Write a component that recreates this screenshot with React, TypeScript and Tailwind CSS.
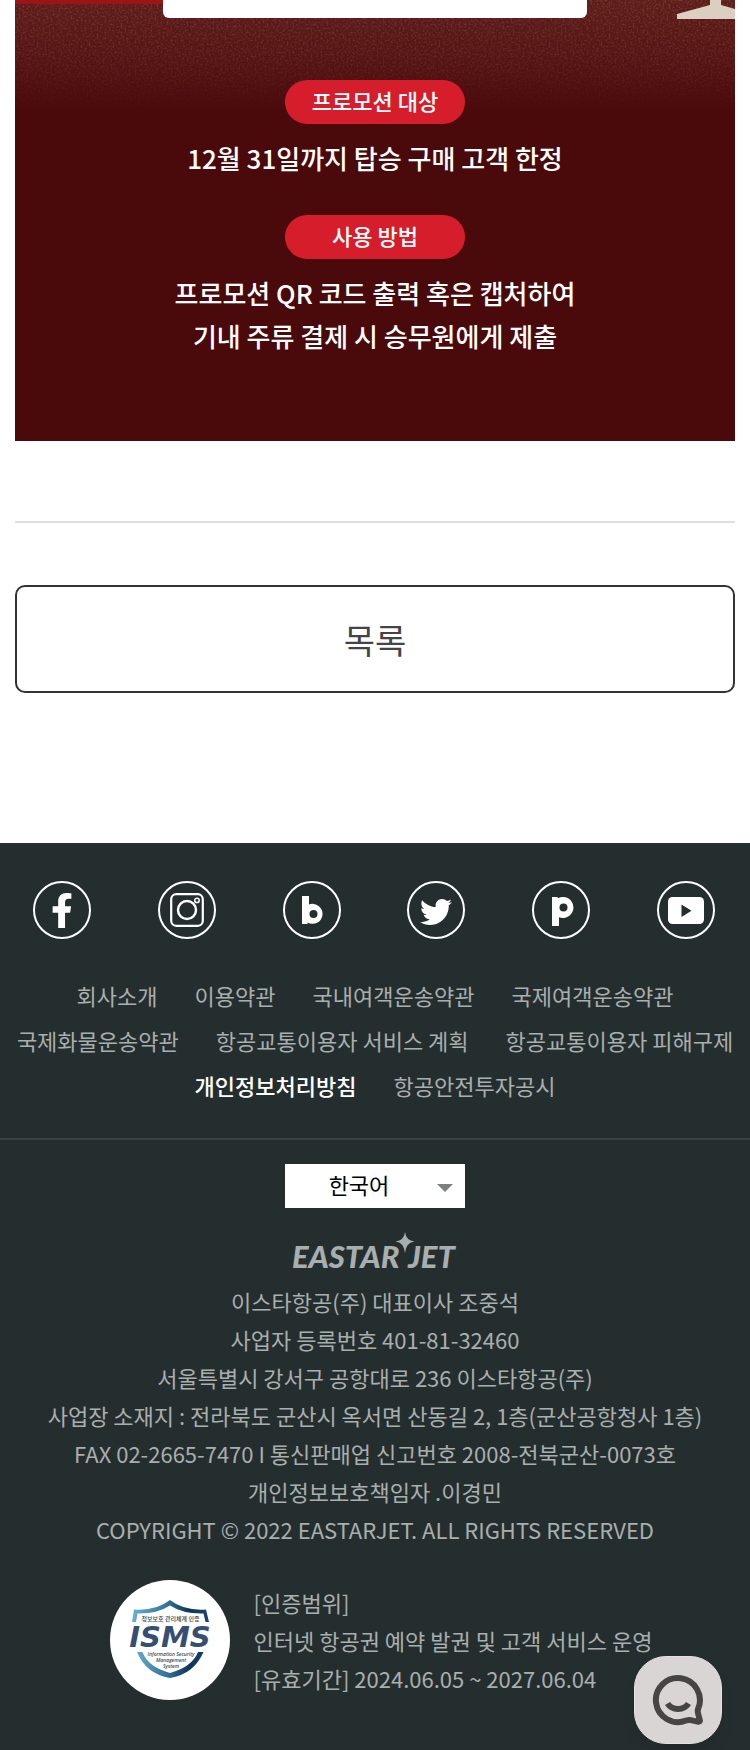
import React from "react";
import { FaFacebookF, FaTwitter } from "react-icons/fa";

const policyLinks = [
  { label: "회사소개" },
  { label: "이용약관" },
  { label: "국내여객운송약관" },
  { label: "국제여객운송약관" },
  { label: "국제화물운송약관" },
  { label: "항공교통이용자 서비스 계획" },
  { label: "항공교통이용자 피해구제" },
  { label: "개인정보처리방침", strong: true },
  { label: "항공안전투자공시" },
];

const companyLines = [
  "이스타항공(주) 대표이사 조중석",
  "사업자 등록번호 401-81-32460",
  "서울특별시 강서구 공항대로 236 이스타항공(주)",
  "사업장 소재지 : 전라북도 군산시 옥서면 산동길 2, 1층(군산공항청사 1층)",
  "FAX 02-2665-7470 I 통신판매업 신고번호 2008-전북군산-0073호",
  "개인정보보호책임자 .이경민",
  "COPYRIGHT © 2022 EASTARJET. ALL RIGHTS RESERVED",
];

function FacebookMark() {
  return <FaFacebookF className="h-[35px] w-[24px]" />;
}

function InstagramMark() {
  return (
    <svg viewBox="0 0 34 34" className="h-[34px] w-[34px]" fill="none" stroke="currentColor" aria-hidden="true">
      <rect x="1.2" y="1.2" width="31.6" height="31.6" rx="5" strokeWidth="2.2" />
      <circle cx="17" cy="17" r="9" strokeWidth="2.4" />
      <circle cx="27" cy="7.4" r="2.2" strokeWidth="1.5" />
    </svg>
  );
}

function BlogMark() {
  return (
    <svg viewBox="0 0 24 30" className="ml-0.5 h-[30px] w-6" aria-hidden="true">
      <path d="M1 1h7v8.500a10 10 0 1 1-1.500 18V29H1z" fill="currentColor" />
      <circle cx="12.500" cy="19" r="4" fill="#252e2f" />
    </svg>
  );
}

function PostMark() {
  return (
    <svg viewBox="0 0 24 30" className="ml-1 mt-0.5 h-[30px] w-6" aria-hidden="true">
      <path d="M1 1h5.500l.5 1.200A10.500 10.500 0 1 1 8 21.200V30H1z" fill="currentColor" />
      <circle cx="12.500" cy="11.500" r="4" fill="#252e2f" />
    </svg>
  );
}

function YoutubeMark() {
  return (
    <svg viewBox="0 0 36 27" className="h-[27px] w-9" aria-hidden="true">
      <rect width="36" height="27" rx="4.500" fill="currentColor" />
      <path d="M13.500 7.500v12.500l10-6.200z" fill="#252e2f" />
    </svg>
  );
}

const socials = [
  { name: "페이스북", icon: <FacebookMark /> },
  { name: "인스타그램", icon: <InstagramMark /> },
  { name: "블로그", icon: <BlogMark /> },
  { name: "트위터", icon: <FaTwitter className="mt-1 h-[32px] w-[32px]" /> },
  { name: "포스트", icon: <PostMark /> },
  { name: "유튜브", icon: <YoutubeMark /> },
];

function AirlineLogo() {
  return (
    <svg viewBox="0 0 166 38" className="h-[38px] w-[166px] overflow-visible" role="img" aria-label="EASTARJET">
      <g fill="#a9aeae" fontFamily="Lato, 'Noto Sans', sans-serif" fontStyle="italic" fontWeight="900" fontSize="31">
        <text x="0" y="36">EASTAR</text>
        <text x="116" y="36">JET</text>
      </g>
      <path d="M113 0q1 8.500 9.500 9.500Q114 10.500 113 21q-1-10.500-9.500-11.500Q112 8.500 113 0z" fill="#a9aeae" />
    </svg>
  );
}

function IsmsBadge() {
  return (
    <svg viewBox="0 0 120 120" className="h-[120px] w-[120px] shrink-0" role="img" aria-label="정보보호 관리체계 인증 ISMS">
      <defs>
        <linearGradient id="shield" x1="0" x2="1">
          <stop offset="0" stopColor="#6ab2d0" />
          <stop offset="0.45" stopColor="#34739a" />
          <stop offset="0.75" stopColor="#0d3558" />
          <stop offset="1" stopColor="#1b456a" />
        </linearGradient>
      </defs>
      <circle cx="60" cy="60" r="60" fill="#fff" />
      <path
        d="M22 42L24 29.500Q46 31 60 20Q74 31 96 29.500L99 42H95.500L93.500 33.500Q73 34 60 25.500Q47 34 27.500 33.500L26 42zM27 72h5.500Q38 87 60 93Q82 87 88 72h5.500Q84 94 60 98Q36 94 27 72z"
        fill="url(#shield)"
      />
      <text x="60.500" y="41" textAnchor="middle" fontFamily="'Noto Sans CJK KR', sans-serif" fontWeight="500" fontSize="6" fill="#3a3f48">
        정보보호 관리체계 인증
      </text>
      <text x="60" y="67" textAnchor="middle" fontFamily="'DejaVu Sans', sans-serif" fontStyle="italic" fontWeight="700" fontSize="29" fill="#354f72">
        ISMS
      </text>
      <g textAnchor="middle" fontFamily="'Open Sans', sans-serif" fontStyle="italic" fontWeight="600" fontSize="5" fill="#3a4a60">
        <text x="61" y="76">Information Security</text>
        <text x="61" y="82">Management</text>
        <text x="61" y="88">System</text>
      </g>
    </svg>
  );
}

function ChatMark() {
  return (
    <svg viewBox="0 0 52 52" className="h-[52px] w-[52px]" fill="none" stroke="#464544" aria-hidden="true">
      <path
        d="M46.200 34.500A22 22 0 1 0 34 46.500Q37 45.500 40 46.300L46.500 47.800Q48.300 47.800 47.800 46L46.200 40Q45.300 37 46.200 34.500z"
        strokeWidth="6"
        strokeLinejoin="round"
      />
      <path d="M15.500 29.500Q19 35 26 35T36.500 29.500" strokeWidth="6" />
    </svg>
  );
}

function Chip({ children }: { children: React.ReactNode }) {
  return (
    <h2 className="flex h-11 w-[180px] items-center justify-center rounded-full bg-[#d61d2b] pb-1 text-[22px] leading-8 font-medium">
      {children}
    </h2>
  );
}

function PromotionBanner() {
  return (
    <section className="relative flex flex-col items-center overflow-hidden bg-[#4a0a0c] pt-20 pb-[84px] text-center text-[26px] leading-[43px] font-medium text-white">
      <div className="absolute inset-x-0 top-0 h-28 bg-linear-to-b from-[#5c1c1a] via-[#551414] to-[#4a0a0c]" />
      <svg className="absolute inset-x-0 top-0 h-28 w-full" preserveAspectRatio="none" aria-hidden="true">
        <defs>
          <filter id="grain">
            <feTurbulence type="fractalNoise" baseFrequency="0.5" numOctaves="2" seed="4" />
            <feColorMatrix values="0 0 0 0 0.5  0 0 0 0 0.25  0 0 0 0 0.17  1.200 0 0 0 -0.5" />
          </filter>
          <linearGradient id="fade" x1="0" y1="0" x2="0" y2="1">
            <stop offset="0" stopColor="#fff" stopOpacity="0.6" />
            <stop offset="0.5" stopColor="#fff" stopOpacity="0.4" />
            <stop offset="1" stopColor="#fff" stopOpacity="0" />
          </linearGradient>
          <mask id="grain-mask">
            <rect width="100%" height="100%" fill="url(#fade)" />
          </mask>
        </defs>
        <g mask="url(#grain-mask)">
          <rect width="100%" height="100%" filter="url(#grain)" />
        </g>
      </svg>
      <div className="absolute top-0 left-0 h-1 w-1/4 bg-[#9c1414]" />
      <div className="absolute top-0 left-1/2 h-[18px] w-[424px] -translate-x-1/2 rounded-b-md bg-white" />
      <svg viewBox="0 0 58 19" className="absolute top-0 right-0 h-[19px] w-[58px]" aria-hidden="true">
        <path d="M33 0h11v5l14 4v10H0v-5L33 5z" fill="#dbcfc2" />
      </svg>
      <div className="relative flex flex-col items-center">
        <Chip>프로모션 대상</Chip>
        <p className="mt-3">12월 31일까지 탑승 구매 고객 한정</p>
        <div className="mt-9">
          <Chip>사용 방법</Chip>
        </div>
        <p className="mt-3">
          프로모션 QR 코드 출력 혹은 캡처하여
          <br />
          기내 주류 결제 시 승무원에게 제출
        </p>
      </div>
    </section>
  );
}

export default function App() {
  return (
    <div className="min-h-screen bg-white font-['Noto_Sans_CJK_KR',sans-serif]">
      <main className="px-[15px] pb-[150px]">
        <PromotionBanner />
        <hr className="mt-20 border-t-2 border-[#dfdfdf]" />
        <button
          type="button"
          className="mt-[62px] flex h-[108px] w-full items-center justify-center rounded-[10px] border-2 border-[#333] bg-white text-[34px] text-[#444]"
        >
          목록
        </button>
      </main>

      <footer className="bg-[#252e2f] pb-[50px] text-[22px] text-[#a9aeae]">
        <ul className="grid grid-cols-6 justify-items-center pt-[38px] pr-0.5">
          {socials.map((s) => (
            <li key={s.name}>
              <a
                href="#"
                aria-label={s.name}
                className="flex h-[58px] w-[58px] items-center justify-center rounded-full border-2 border-white text-white"
              >
                {s.icon}
              </a>
            </li>
          ))}
        </ul>

        <nav className="flex flex-wrap justify-center gap-x-[37px] pt-[34px] pb-[30px] leading-[45px]">
          {policyLinks.map((l) => (
            <a key={l.label} href="#" className={l.strong ? "font-medium text-white" : ""}>
              {l.label}
            </a>
          ))}
        </nav>

        <div className="flex flex-col items-center border-t-2 border-[#394243] pt-6">
          <div className="relative">
            <select
              aria-label="언어 선택"
              defaultValue="ko"
              className="block h-11 w-[180px] appearance-none bg-white pr-8 pb-1 text-center text-[22px] text-black [text-align-last:center]"
            >
              <option value="ko">한국어</option>
              <option value="en">English</option>
            </select>
            <svg viewBox="0 0 16 8" className="pointer-events-none absolute top-5 right-3 h-2 w-4" aria-hidden="true">
              <path d="M0 0h16L8 8z" fill="#7d8080" />
            </svg>
          </div>
          <div className="mt-6">
            <AirlineLogo />
          </div>
          <address className="mt-3 text-center leading-[38px] not-italic">
            {companyLines.map((line) => (
              <p key={line}>{line}</p>
            ))}
          </address>
        </div>

        <div className="mt-8 flex items-center justify-center gap-6 pl-3">
          <IsmsBadge />
          <p className="leading-[38px]">
            [인증범위]
            <br />
            인터넷 항공권 예약 발권 및 고객 서비스 운영
            <br />
            [유효기간] 2024.06.05 ~ 2027.06.04
          </p>
        </div>
      </footer>

      <button
        type="button"
        aria-label="채팅 상담"
        className="fixed right-7 bottom-1.5 flex h-[88px] w-[88px] items-center justify-center rounded-[32px] border border-[#e4e2e1] bg-[#d8d5d4] shadow-lg"
      >
        <ChatMark />
      </button>
    </div>
  );
}
